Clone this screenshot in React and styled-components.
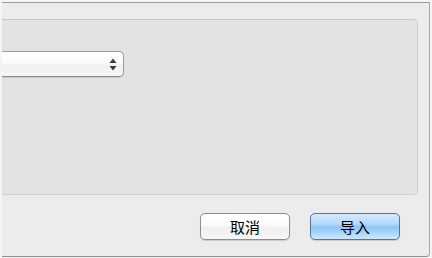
import React from "react";
import styled, { createGlobalStyle } from "styled-components";

const GlobalStyle = createGlobalStyle`
  html, body {
    margin: 0;
    padding: 0;
    background: #f4f4f4;
    overflow: hidden;
  }
  body {
    font-family: "Noto Sans CJK SC", "Liberation Sans", sans-serif;
  }
`;

const Window = styled.div`
  box-sizing: border-box;
  margin: 2px 2px 0 2px;
  height: 255px;
  background: #ececec;
  border-top: 1px solid #9d9d9d;
  border-right: 1px solid #a8a8a8;
  border-bottom: 1px solid #8f8f8f;
  border-bottom-right-radius: 4px;
  display: flex;
  flex-direction: column;
  overflow: hidden;
`;

const GroupBox = styled.div`
  box-sizing: border-box;
  margin: 16px 11px 0 -12px;
  height: 176px;
  background: #e3e3e3;
  border: 1px solid #cfcfcf;
  border-top-color: #c6c6c6;
  border-radius: 5px;
  padding-top: 31px;
`;

const PopUp = styled.div`
  box-sizing: border-box;
  margin-left: -20px;
  width: 153px;
  height: 26px;
  background: linear-gradient(#ffffff 0%, #fbfbfb 45%, #f0f0f0 55%, #f6f6f6 100%);
  border: 1px solid #9c9c9c;
  border-bottom-color: #8a8a8a;
  border-radius: 5px;
  box-shadow: 0 1px 1px rgba(0, 0, 0, 0.12);
  display: flex;
  align-items: center;
  justify-content: flex-end;
  padding-right: 6px;
`;

const Arrows = styled.svg`
  width: 8px;
  height: 13px;
  display: block;
`;

const Footer = styled.div`
  display: flex;
  justify-content: flex-end;
  gap: 20px;
  padding: 18px 29px 0 0;
`;

const Button = styled.button`
  box-sizing: border-box;
  width: 90px;
  height: 27px;
  border-radius: 5px;
  border: 1px solid ${(p) => (p.$primary ? "#5b7290" : "#8e8e8e")};
  background: ${(p) =>
    p.$primary
      ? "linear-gradient(#d6eafd 0%, #b4d8fb 40%, #8ec6f6 52%, #a9d4fa 75%, #cde8ff 100%)"
      : "linear-gradient(#ffffff 0%, #fbfbfb 45%, #efefef 55%, #f7f7f7 100%)"};
  box-shadow: 0 1px 1px rgba(0, 0, 0, 0.15);
  font-family: "Noto Sans CJK SC", "Liberation Sans", sans-serif;
  font-size: 15px;
  font-weight: 400;
  color: #000;
  padding: 0;
  line-height: 1;
  display: flex;
  align-items: center;
  justify-content: center;
`;

export default function App() {
  return (
    <>
      <GlobalStyle />
      <Window>
        <GroupBox>
          <PopUp>
            <Arrows viewBox="0 0 8 13">
              <path d="M4 0.5 L7.5 5 L0.5 5 Z" fill="#3a3a3a" />
              <path d="M4 12.5 L7.5 8 L0.5 8 Z" fill="#3a3a3a" />
            </Arrows>
          </PopUp>
        </GroupBox>
        <Footer>
          <Button>取消</Button>
          <Button $primary>导入</Button>
        </Footer>
      </Window>
    </>
  );
}
